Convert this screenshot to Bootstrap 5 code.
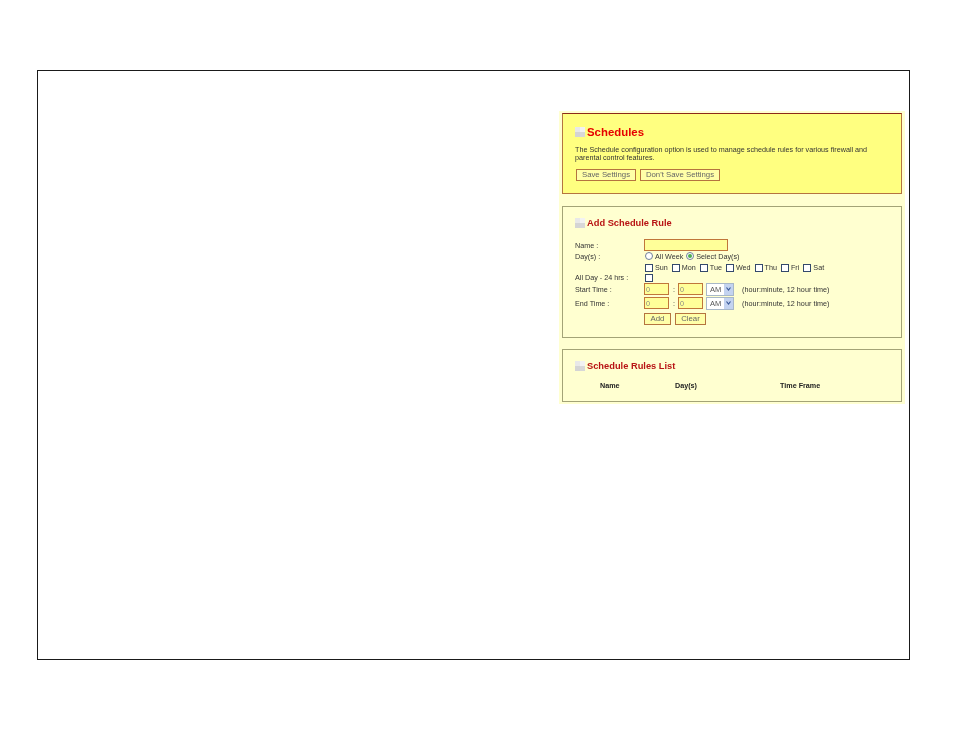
<!DOCTYPE html>
<html lang="en">
<head>
  <meta charset="UTF-8" />
  <title>Schedules</title>
  <link href="https://cdn.jsdelivr.net/npm/bootstrap@5.3.2/dist/css/bootstrap.min.css" rel="stylesheet">
  <style>
    body {
      background: #fff;
      color: #333;
      font-family: "Liberation Sans", Arial, sans-serif;
      font-size: 7.2px;
      line-height: 8px;
    }
    .sheet {
      width: 873px;
      height: 590px;
      margin: 70px 0 0 37px;
      border: 1px solid #1a1a1a;
      padding: 40px 4px 0 0;
    }
    .pale-col {
      width: 346px;
      padding: 2px 3px;
      background: #ffffd0;
      filter: blur(.3px);
    }
    .panel-box {
      border: 1px solid #a3a377;
      padding: 0 12px;
    }
    .panel-top {
      height: 81px;
      background: #ffff80;
      border-color: #b5743f;
      border-top-color: #8c2a1a;
      padding-top: 11px;
      margin-bottom: 12px;
    }
    .panel-add {
      height: 132px;
      padding-top: 10px;
      margin-bottom: 11px;
    }
    .panel-list {
      height: 53px;
      padding-top: 10px;
    }
    .sq-icon {
      width: 10px;
      height: 10px;
      flex: none;
      background: conic-gradient(#f2f2f2 25%, #d8d8d8 0 50%, #d4d4d4 0 75%, #e8e8e8 0);
    }
    .head-line {
      display: flex;
      align-items: center;
      gap: 2px;
    }
    .head-big {
      color: #e60000;
      font-size: 11.4px;
      line-height: 14px;
      font-weight: 700;
    }
    .head-small {
      color: #b81414;
      font-size: 9.3px;
      line-height: 12px;
      font-weight: 700;
    }
    .intro {
      margin: 7px 0;
      width: 300px;
    }
    .old-btn {
      --bs-btn-padding-x: 0;
      --bs-btn-padding-y: 0;
      --bs-btn-font-size: 7.8px;
      --bs-btn-line-height: 10px;
      --bs-btn-border-radius: 0;
      background: #ffffa8;
      border: 1px solid #b5743f;
      color: #666;
      height: 12px;
    }
    .form-grid {
      display: grid;
      grid-template-columns: 69px auto;
      grid-template-rows: 12px 11px 11px 9px 14px 14px auto;
      margin-top: 10px;
      align-items: center;
      line-height: 9px;
    }
    .txt-field {
      height: 12px;
      background: #ffff99;
      border: 1px solid #c0763a;
      padding: 0 1px;
      font: inherit;
      color: #888;
      border-radius: 0;
      display: block;
    }
    .fake-radio {
      width: 8px;
      height: 8px;
      border-radius: 50%;
      border: 1px solid #6f7f99;
      background: #fff;
      position: relative;
      flex: none;
      margin-top: -2px;
    }
    .fake-radio.on::after {
      content: "";
      position: absolute;
      inset: 1px;
      border-radius: 50%;
      background: #4caf50;
    }
    .fake-check {
      width: 8px;
      height: 8px;
      border: 1px solid #34496b;
      background: #fff;
      flex: none;
    }
    .am-select {
      width: 28px;
      height: 13px;
      border: 1px solid #a8b8c8;
      background: #fff;
      color: #555;
      padding-left: 3px;
      font-size: 7.5px;
      line-height: 11px;
    }
    .am-arrow {
      width: 9px;
      height: 11px;
      background: #c3d3f0;
    }
    .list-cols {
      display: grid;
      grid-template-columns: 75px 105px auto;
      padding-left: 25px;
      margin-top: 9px;
      line-height: 9px;
      font-weight: 700;
      color: #222;
    }
    .btn-line { padding-left: 1px; }
    .save-w { width: 60px; }
    .nosave-w { width: 80px; }
    .add-w { width: 27px; }
    .clear-w { width: 31px; }
    .name-w { width: 84px; }
    .time-w { width: 25px; }
    .radio-row { gap: 2px; padding-left: 1px; }
    .radio-row span:nth-child(2) { margin-right: 1px; }
    .day-row { gap: 2px; padding-left: 1px; }
    .day-row span:nth-child(even) { margin-right: 2px; }
    .time-row { gap: 3px; }
    .time-colon { margin-left: 1px; }
    .hint { margin-left: 5px; letter-spacing: .03px; }
    .add-row { margin-top: 3px; }
  </style>
</head>
<body>
  <div class="sheet d-flex justify-content-end align-items-start">
    <div class="pale-col">
      <div class="panel-box panel-top">
        <div class="head-line head-big"><span class="sq-icon"></span>Schedules</div>
        <div class="intro">The Schedule configuration option is used to manage schedule rules for various firewall and parental control features.</div>
        <div class="d-flex gap-1 btn-line">
          <button type="button" class="btn old-btn save-w">Save Settings</button>
          <button type="button" class="btn old-btn nosave-w">Don't Save Settings</button>
        </div>
      </div>

      <div class="panel-box panel-add">
        <div class="head-line head-small"><span class="sq-icon"></span>Add Schedule Rule</div>
        <div class="form-grid">
          <div>Name :</div>
          <div><input class="txt-field name-w" type="text"></div>
          <div>Day(s) :</div>
          <div class="d-flex align-items-center radio-row">
            <span class="fake-radio"></span><span>All Week</span>
            <span class="fake-radio on"></span><span>Select Day(s)</span>
          </div>
          <div></div>
          <div class="d-flex align-items-center day-row">
            <span class="fake-check"></span><span>Sun</span>
            <span class="fake-check"></span><span>Mon</span>
            <span class="fake-check"></span><span>Tue</span>
            <span class="fake-check"></span><span>Wed</span>
            <span class="fake-check"></span><span>Thu</span>
            <span class="fake-check"></span><span>Fri</span>
            <span class="fake-check"></span><span>Sat</span>
          </div>
          <div>All Day - 24 hrs :</div>
          <div class="day-row"><span class="fake-check d-block"></span></div>
          <div>Start Time :</div>
          <div class="d-flex align-items-center time-row">
            <input class="txt-field time-w" type="text" value="0"><span class="time-colon">:</span>
            <input class="txt-field time-w" type="text" value="0">
            <span class="am-select d-flex justify-content-between align-items-center">AM<span class="am-arrow d-flex align-items-center justify-content-center"><svg width="5" height="4" viewBox="0 0 5 4"><path d="M0.5 0.5 2.5 3 4.5 0.5" fill="none" stroke="#3a5a9a" stroke-width="1.2"/></svg></span></span>
            <span class="hint">(hour:minute, 12 hour time)</span>
          </div>
          <div>End Time :</div>
          <div class="d-flex align-items-center time-row">
            <input class="txt-field time-w" type="text" value="0"><span class="time-colon">:</span>
            <input class="txt-field time-w" type="text" value="0">
            <span class="am-select d-flex justify-content-between align-items-center">AM<span class="am-arrow d-flex align-items-center justify-content-center"><svg width="5" height="4" viewBox="0 0 5 4"><path d="M0.5 0.5 2.5 3 4.5 0.5" fill="none" stroke="#3a5a9a" stroke-width="1.2"/></svg></span></span>
            <span class="hint">(hour:minute, 12 hour time)</span>
          </div>
          <div></div>
          <div class="d-flex gap-1 add-row">
            <button type="button" class="btn old-btn add-w">Add</button>
            <button type="button" class="btn old-btn clear-w">Clear</button>
          </div>
        </div>
      </div>

      <div class="panel-box panel-list">
        <div class="head-line head-small"><span class="sq-icon"></span>Schedule Rules List</div>
        <div class="list-cols"><div>Name</div><div>Day(s)</div><div>Time Frame</div></div>
      </div>
    </div>
  </div>
  <script src="https://cdn.jsdelivr.net/npm/bootstrap@5.3.2/dist/js/bootstrap.bundle.min.js"></script>
</body>
</html>
